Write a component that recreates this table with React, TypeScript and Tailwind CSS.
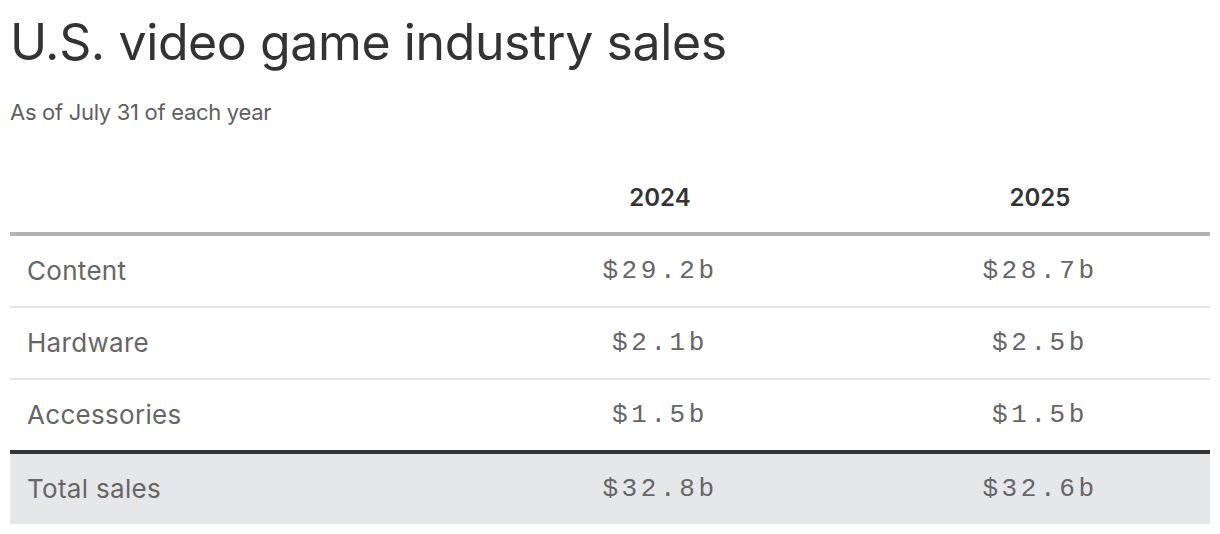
const rows = [
  { label: "Content", a: "$29.2b", b: "$28.7b" },
  { label: "Hardware", a: "$2.1b", b: "$2.5b" },
  { label: "Accessories", a: "$1.5b", b: "$1.5b" },
];

const mono = "font-['Liberation_Mono',monospace] text-[26px] tracking-[3.6px] text-[#666]";
const label = "w-[460px] pl-[17px] pb-[2px] text-[26px] tracking-[0.3px] text-[#666]";

export default function App() {
  return (
    <div className="w-[1220px] h-[534px] bg-white px-[10px] font-['Inter',sans-serif]">
      <h1 className="pt-[14px] text-[50px] leading-[56px] tracking-[-0.4px] text-[#333]">
        U.S. video game industry sales
      </h1>
      <p className="mt-[28px] text-[22px] leading-[28px] tracking-[-0.3px] text-[#5f5f5f]">
        As of July 31 of each year
      </p>

      <div className="mt-[42px] w-[1200px]">
        {/* header */}
        <div className="flex h-[68px] items-center border-b-4 border-[#b3b3b3] pb-[4px]">
          <div className="w-[460px]" />
          <div className="w-[380px] text-center text-[24px] font-semibold text-[#333]">2024</div>
          <div className="w-[360px] pl-5 text-center text-[24px] font-semibold text-[#333]">2025</div>
        </div>

        {rows.map((r, i) => (
          <div
            key={r.label}
            className={
              "flex items-center " +
              (i < rows.length - 1
                ? "h-[72px] border-b-2 border-[#e5e5e5]"
                : "h-[74px] border-b-4 border-[#333]")
            }
          >
            <div className={label}>{r.label}</div>
            <div className={"w-[380px] text-center " + mono}>{r.a}</div>
            <div className={"w-[360px] pl-5 text-center " + mono}>{r.b}</div>
          </div>
        ))}

        {/* total */}
        <div className="flex h-[70px] items-center bg-[#e6e7e9]">
          <div className={label}>Total sales</div>
          <div className={"w-[380px] text-center " + mono}>$32.8b</div>
          <div className={"w-[360px] pl-5 text-center " + mono}>$32.6b</div>
        </div>
      </div>
    </div>
  );
}
